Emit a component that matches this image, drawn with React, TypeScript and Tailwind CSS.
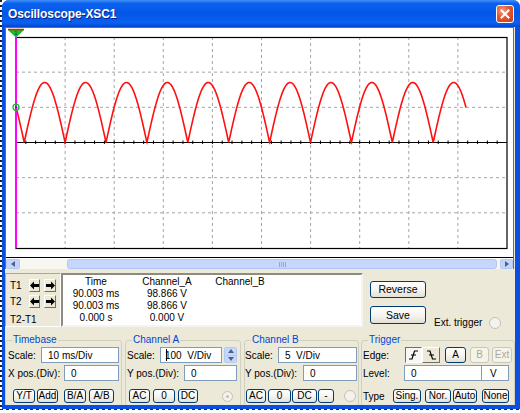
import React from 'react';

type BoxProps = { className?: string; children?: React.ReactNode };

const XpButton: React.FC<BoxProps & { disabled?: boolean }> = ({ className = '', disabled = false, children }) => (
  <div
    className={`flex items-center justify-center rounded-[3px] border leading-none ${
      disabled
        ? 'border-[#c9c7ba] text-[#aca899] bg-[#f5f4ea]'
        : 'border-[#003c74] text-black bg-[linear-gradient(180deg,#ffffff_0%,#f4f3ef_55%,#e3e0d6_100%)]'
    } ${className}`}
  >
    {children}
  </div>
);

const Field: React.FC<BoxProps> = ({ className = '', children }) => (
  <div className={`flex items-center bg-white border border-[#7f9db9] pl-[6px] ${className}`}>{children}</div>
);

const Radio: React.FC<{ dot?: boolean; className?: string }> = ({ dot = false, className = '' }) => (
  <div className={`rounded-full border border-[#c4c2b4] bg-[#f3f2ec] flex items-center justify-center ${className}`}>
    {dot && <div className="w-[3px] h-[3px] rounded-full bg-[#c4c2b4]" />}
  </div>
);

const Arrow: React.FC<{ dir: 'left' | 'right' }> = ({ dir }) => (
  <svg width="9" height="9" viewBox="0 0 9 9">
    {dir === 'left' ? (
      <path d="M0 4.5 L4 0.5 V3 H9 V6 H4 V8.5 Z" fill="#000" />
    ) : (
      <path d="M9 4.5 L5 0.5 V3 H0 V6 H5 V8.5 Z" fill="#000" />
    )}
  </svg>
);

const SmallBtn: React.FC<BoxProps> = ({ className = '', children }) => (
  <div
    className={`h-[13px] flex items-center justify-center bg-[#ece9d8] border border-t-white border-l-white border-r-[#716f64] border-b-[#716f64] ${className}`}
  >
    {children}
  </div>
);

// plot geometry, in svg coords
const PX = 10;
const PY = 9;
const PW = 491;
const PH = 211;
const BASE = PY + PH / 2;

function wavePath() {
  const pts: string[] = [];
  for (let x = PX; x <= PX + 450; x += 0.5) {
    const y = BASE - 60 * Math.abs(Math.sin((Math.PI * (x - 18.2)) / 40.9));
    pts.push(`${pts.length ? 'L' : 'M'}${x.toFixed(1)} ${y.toFixed(2)}`);
  }
  return pts.join(' ');
}

const Screen: React.FC = () => {
  const vx = Array.from({ length: 9 }, (_, i) => PX + (PW / 10) * (i + 1));
  const hy = [1, 2, 4, 5].map((j) => PY + (PH / 6) * j);
  const ticks = Array.from({ length: 50 }, (_, i) => PX + (PW / 50) * i);
  return (
    <svg width="507" height="229" viewBox="0 0 507 229" className="block">
      {vx.map((x) => (
        <line key={x} x1={x} y1={PY} x2={x} y2={PY + PH} stroke="#a5a5a5" strokeDasharray="3 3" />
      ))}
      {hy.map((y) => (
        <line key={y} x1={PX} y1={y} x2={PX + PW} y2={y} stroke="#a5a5a5" strokeDasharray="3 3" />
      ))}
      <line x1={PX} y1={BASE} x2={PX + PW} y2={BASE} stroke="#000" strokeWidth="1.2" />
      {ticks.map((x) => (
        <line key={x} x1={x} y1={BASE - 2} x2={x} y2={BASE + 1.5} stroke="#000" />
      ))}
      <rect x={PX} y={PY + 0.5} width={PW} height={PH} fill="none" stroke="#000" strokeWidth="1.2" />
      <path d={wavePath()} fill="none" stroke="#ff1010" strokeWidth="1.6" />
      <line x1={PX} y1={PY - 1} x2={PX} y2={PY + PH} stroke="#ff00ff" strokeWidth="2" />
      <polygon points="2,2 18,2 10,9.5" fill="#10c020" />
      <line x1="2" y1="1.5" x2="18" y2="1.5" stroke="#ff1010" strokeWidth="1.5" />
      <text x="10" y="6.5" fontSize="6" textAnchor="middle" fill="#1030a0" fontFamily="Liberation Sans, Arial, sans-serif">
        1
      </text>
      <circle cx={PX} cy={BASE - 60 * 0.588} r="3" fill="none" stroke="#10c020" strokeWidth="1.3" />
      <circle cx={PX} cy={BASE - 60 * 0.588} r="1" fill="#1030a0" />
    </svg>
  );
};

const Scrollbar: React.FC = () => (
  <div className="flex h-[10px] bg-[#f7f6f1]">
    <div className="w-[14px] h-full rounded-[2px] bg-[#c3d5fc] border border-[#b4c8f6] flex items-center justify-center">
      <svg width="4" height="6" viewBox="0 0 4 6">
        <path d="M4 0 L0 3 L4 6 Z" fill="#4d6185" />
      </svg>
    </div>
    <div className="flex-1 flex pl-[47px] pr-[3px]">
      <div className="flex-1 h-full rounded-[3px] bg-[#c6d7fc] border border-[#b0c5f5] flex items-center justify-center gap-[1px]">
        <div className="w-px h-[5px] bg-[#8fa9e6]" />
        <div className="w-px h-[5px] bg-[#8fa9e6]" />
        <div className="w-px h-[5px] bg-[#8fa9e6]" />
        <div className="w-px h-[5px] bg-[#8fa9e6]" />
      </div>
    </div>
    <div className="w-[13px] h-full rounded-[2px] bg-[#c3d5fc] border border-[#b4c8f6] flex items-center justify-center">
      <svg width="4" height="6" viewBox="0 0 4 6">
        <path d="M0 0 L4 3 L0 6 Z" fill="#4d6185" />
      </svg>
    </div>
  </div>
);

const Group: React.FC<BoxProps & { title: string }> = ({ title, className = '', children }) => (
  <fieldset className={`h-[73px] border border-[#d0d0bf] rounded-[3px] ${className}`}>
    <legend className="ml-[6px] px-[1px] leading-[12px] text-[#0046d5]">{title}</legend>
    {children}
  </fieldset>
);

const Edge: React.FC<{ rising?: boolean; pressed?: boolean }> = ({ rising = false, pressed = false }) => (
  <div
    className={`h-full flex items-center justify-center border ${
      pressed
        ? 'w-[17px] bg-[#f8f7f3] border-t-[#716f64] border-l-[#716f64] border-r-white border-b-white'
        : 'w-[18px] bg-[#ece9d8] border-t-white border-l-white border-r-[#716f64] border-b-[#716f64]'
    }`}
  >
    <svg width="11" height="10" viewBox="0 0 11 10">
      {rising ? (
        <path d="M1 9 H4 L6.5 1 H10 M3 5 H8" fill="none" stroke="#000" strokeWidth="1.2" />
      ) : (
        <path d="M1 1 H4 L6.5 9 H10 M3 5 H8" fill="none" stroke="#000" strokeWidth="1.2" />
      )}
    </svg>
  </div>
);

const Label: React.FC<BoxProps> = ({ className = '', children }) => (
  <div className={`flex items-center h-full whitespace-nowrap ${className}`}>{children}</div>
);

export default function App() {
  return (
    <div className="w-[520px] h-[413px] overflow-hidden bg-white flex flex-col font-['Liberation_Sans',Arial,sans-serif] text-[10px] text-black">
      <div className="flex h-[409px]">
        <div className="w-[2px] h-full bg-[repeating-linear-gradient(180deg,#222_0_2px,transparent_2px_5px)]" />
        <div className="w-[518px] h-full flex flex-col rounded-t-[7px] bg-[#0b4fe0] overflow-hidden">
          {/* title bar */}
          <div className="h-[27px] shrink-0 flex items-center pl-[6px] pr-[6px] bg-[linear-gradient(180deg,#4592f8_0%,#0b62ef_12%,#0556e6_50%,#0a60f0_85%,#0444cc_100%)]">
            <span className="text-white font-bold text-[12px] tracking-[-0.1px] [text-shadow:1px_1px_#0a1e8a]">
              Oscilloscope-XSC1
            </span>
            <div className="ml-auto w-[18px] h-[18px] rounded-[3px] border border-white bg-[radial-gradient(circle_at_35%_30%,#f4a080_0%,#e4572e_45%,#c83a16_100%)] flex items-center justify-center">
              <svg width="10" height="10" viewBox="0 0 10 10">
                <path d="M1.5 1.5 L8.5 8.5 M8.5 1.5 L1.5 8.5" stroke="#fff" strokeWidth="2" strokeLinecap="square" />
              </svg>
            </div>
          </div>

          {/* client */}
          <div className="ml-[3px] w-[510px] h-[378px] bg-[#ece9d8] flex flex-col overflow-hidden">
            <div className="w-[509px] h-[242px] flex flex-col border-t border-l border-r border-[#6f6d62] bg-white">
              <Screen />
              <div className="h-px bg-black" />
              <div className="h-px bg-white" />
              <Scrollbar />
            </div>

            <div className="flex mt-[4px] h-[54px]">
              <div className="w-[56px] h-full border border-t-[#aca899] border-l-[#aca899] border-r-white border-b-white flex flex-col">
                <div className="flex h-[13px] mt-[5px]">
                  <Label className="w-[23px] pl-[4px]">T1</Label>
                  <SmallBtn className="w-[11px]">
                    <Arrow dir="left" />
                  </SmallBtn>
                  <SmallBtn className="w-[12px] ml-[4px]">
                    <Arrow dir="right" />
                  </SmallBtn>
                </div>
                <div className="flex h-[13px] mt-[3px]">
                  <Label className="w-[23px] pl-[4px]">T2</Label>
                  <SmallBtn className="w-[11px]">
                    <Arrow dir="left" />
                  </SmallBtn>
                  <SmallBtn className="w-[12px] ml-[4px]">
                    <Arrow dir="right" />
                  </SmallBtn>
                </div>
                <Label className="h-[12px] mt-[4px] pl-[4px]">T2-T1</Label>
              </div>

              <div className="w-[302px] h-full bg-white border-2 border-t-[#8d8b80] border-l-[#8d8b80] border-r-[#f5f4ee] border-b-[#f5f4ee] grid grid-cols-[66px_76px_70px] auto-rows-[12px] content-start pt-[1px] leading-[12px] text-center">
                <div>Time</div>
                <div>Channel_A</div>
                <div>Channel_B</div>
                <div>90.003 ms</div>
                <div>98.866 V</div>
                <div />
                <div>90.003 ms</div>
                <div>98.866 V</div>
                <div />
                <div>0.000 s</div>
                <div>0.000 V</div>
                <div />
              </div>

              <div className="ml-[7px] w-[56px] flex flex-col">
                <XpButton className="h-[17px] mt-[8px] text-[10.5px]">Reverse</XpButton>
                <XpButton className="h-[18px] mt-[8px] text-[10.5px]">Save</XpButton>
              </div>

              <div className="ml-[8px] mt-[44px] h-[12px] flex items-center">
                <span className="leading-none">Ext. trigger</span>
                <Radio className="ml-[7px] w-[12px] h-[12px]" />
              </div>
            </div>

            <div className="flex mt-[7px]">
              <Group title="Timebase" className="w-[117px]">
                <div className="flex h-[16px] mt-[1px] ml-[2px]">
                  <Label className="w-[33px]">Scale:</Label>
                  <Field className="w-[78px] h-full">10 ms/Div</Field>
                </div>
                <div className="flex h-[16px] mt-[2px] ml-[2px]">
                  <Label className="w-[56px]">X pos.(Div):</Label>
                  <Field className="w-[55px] h-full">0</Field>
                </div>
                <div className="flex h-[14px] mt-[8px] ml-[7px]">
                  <XpButton className="w-[22px]">Y/T</XpButton>
                  <XpButton className="w-[21px] ml-[2px]">Add</XpButton>
                  <XpButton className="w-[22px] ml-[6px]">B/A</XpButton>
                  <XpButton className="w-[25px] ml-[3px]">A/B</XpButton>
                </div>
              </Group>

              <Group title="Channel A" className="w-[116px] ml-[3px]">
                <div className="flex h-[16px] mt-[1px] ml-[1px]">
                  <Label className="w-[33px]">Scale:</Label>
                  <Field className="w-[62px] h-full !pl-[5px]">
                    <span className="w-px h-[12px] bg-black -mr-[2px]" />
                    <span>100&nbsp;&nbsp;V/Div</span>
                  </Field>
                  <div className="ml-[2px] w-[13px] h-full flex flex-col rounded-[2px] overflow-hidden border border-[#b4c8f6]">
                    <div className="flex-1 bg-[#c6d7fc] flex items-center justify-center border-b border-[#b4c8f6]">
                      <svg width="6" height="4" viewBox="0 0 6 4">
                        <path d="M0 4 L3 0 L6 4 Z" fill="#4d6185" />
                      </svg>
                    </div>
                    <div className="flex-1 bg-[#c6d7fc] flex items-center justify-center">
                      <svg width="6" height="4" viewBox="0 0 6 4">
                        <path d="M0 0 L3 4 L6 0 Z" fill="#4d6185" />
                      </svg>
                    </div>
                  </div>
                </div>
                <div className="flex h-[16px] mt-[2px] ml-[1px]">
                  <Label className="w-[57px]">Y pos.(Div):</Label>
                  <Field className="w-[53px] h-full">0</Field>
                </div>
                <div className="flex items-center h-[14px] mt-[8px] ml-[3px]">
                  <XpButton className="w-[21px] h-full">AC</XpButton>
                  <XpButton className="w-[22px] h-full ml-[3px]">0</XpButton>
                  <XpButton className="w-[20px] h-full ml-[3px]">DC</XpButton>
                  <Radio dot className="ml-[24px] w-[11px] h-[11px]" />
                </div>
              </Group>

              <Group title="Channel B" className="w-[115px] ml-[3px]">
                <div className="flex h-[16px] mt-[1px]">
                  <Label className="w-[33px]">Scale:</Label>
                  <Field className="w-[79px] h-full">5&nbsp;&nbsp;V/Div</Field>
                </div>
                <div className="flex h-[16px] mt-[2px]">
                  <Label className="w-[58px]">Y pos.(Div):</Label>
                  <Field className="w-[54px] h-full">0</Field>
                </div>
                <div className="flex items-center h-[14px] mt-[8px] ml-[1px]">
                  <XpButton className="w-[20px] h-full">AC</XpButton>
                  <XpButton className="w-[23px] h-full ml-[2px]">0</XpButton>
                  <XpButton className="w-[25px] h-full ml-[1px]">DC</XpButton>
                  <XpButton className="w-[16px] h-full ml-[1px]">-</XpButton>
                  <Radio className="ml-[10px] w-[12px] h-[12px]" />
                </div>
              </Group>

              <Group title="Trigger" className="w-[154px] ml-[2px]">
                <div className="flex h-[16px] mt-[1px] ml-[1px]">
                  <Label className="w-[42px]">Edge:</Label>
                  <Edge rising pressed />
                  <Edge />
                  <XpButton className="w-[21px] h-full ml-[5px] !bg-[#f7f6f1]">A</XpButton>
                  <XpButton disabled className="w-[19px] h-full ml-[4px]">
                    B
                  </XpButton>
                  <XpButton disabled className="w-[20px] h-full ml-[3px]">
                    Ext
                  </XpButton>
                </div>
                <div className="flex h-[16px] mt-[2px] ml-[1px]">
                  <Label className="w-[41px]">Level:</Label>
                  <Field className="w-[78px] h-full">0</Field>
                  <Field className="w-[28px] h-full -ml-px !pl-[8px]">V</Field>
                </div>
                <div className="flex h-[14px] mt-[8px] ml-[1px]">
                  <Label className="w-[30px]">Type</Label>
                  <XpButton className="w-[28px]">Sing.</XpButton>
                  <XpButton className="w-[26px] ml-[4px]">Nor.</XpButton>
                  <XpButton className="w-[24px] ml-[2px]">Auto</XpButton>
                  <XpButton className="w-[27px] ml-[5px]">None</XpButton>
                </div>
              </Group>
            </div>
          </div>
        </div>
      </div>
      <div className="h-[4px] bg-[repeating-linear-gradient(90deg,#222_0_3px,transparent_3px_6px)] bg-[length:100%_1px] bg-no-repeat" />
    </div>
  );
}
